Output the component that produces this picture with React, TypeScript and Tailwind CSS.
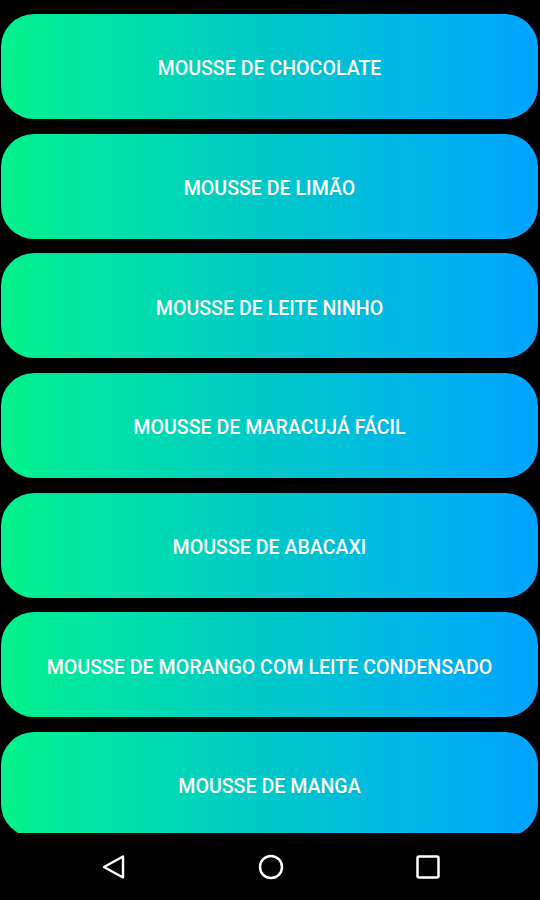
const receitas = [
    "MOUSSE DE CHOCOLATE",
    "MOUSSE DE LIMÃO",
    "MOUSSE DE LEITE NINHO",
    "MOUSSE DE MARACUJÁ FÁCIL",
    "MOUSSE DE ABACAXI",
    "MOUSSE DE MORANGO COM LEITE CONDENSADO",
    "MOUSSE DE MANGA",
];

const NavBar: React.FC = () => {
    return (
        <div className="h-[67px] bg-black flex items-center justify-between pl-[101px] pr-[100px]">
            <svg width="25" height="26" viewBox="0 0 25 26" fill="none">
                <path d="M22 2.5 L3 13 L22 23.5 Z" stroke="white" strokeWidth="2.4" strokeLinejoin="round" />
            </svg>
            <svg width="26" height="26" viewBox="0 0 26 26" fill="none">
                <circle cx="13" cy="13" r="11" stroke="white" strokeWidth="2.5" />
            </svg>
            <svg width="24" height="24" viewBox="0 0 24 24" fill="none">
                <rect x="1.5" y="1.5" width="21" height="21" rx="1.5" stroke="white" strokeWidth="2.5" />
            </svg>
        </div>
    );
};

const App: React.FC = () => {
    return (
        <div className="w-[540px] h-[900px] bg-black flex flex-col font-['Roboto',sans-serif]">
            <div className="h-[833px] overflow-hidden">
                <div className="flex flex-col gap-[14.7px] pt-[14px] pl-px pr-[2px]">
                    {receitas.map((r) => (
                        <button
                            key={r}
                            className="h-[105px] shrink-0 w-full rounded-[33px] bg-gradient-to-r from-[#05f28a] via-[#00c8c9] to-[#00a3ff] text-white text-[19.6px] font-medium grid place-items-center pt-[5px]"
                        >
                            {r}
                        </button>
                    ))}
                </div>
            </div>
            <NavBar />
        </div>
    );
};

export default App;
